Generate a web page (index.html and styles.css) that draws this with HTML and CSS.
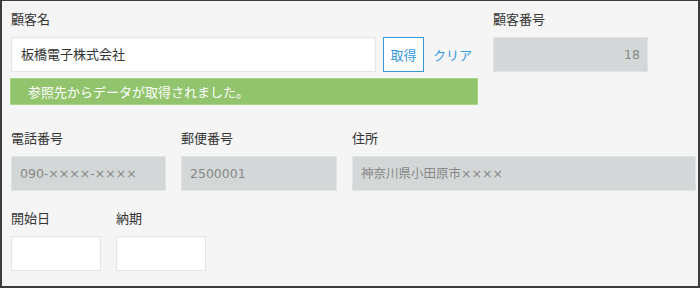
FILE: index.html
```html
<!DOCTYPE html>
<html lang="ja">
<head>
<meta charset="utf-8">
<link rel="stylesheet" href="styles.css">
</head>
<body>
<div class="frame">
  <div class="row row-first">
    <div class="field field-name">
      <div class="label">顧客名</div>
      <div class="lookup">
        <div class="input input-name">板橋電子株式会社</div>
        <button class="btn-get">取得</button>
        <span class="link-clear">クリア</span>
      </div>
      <div class="message">参照先からデータが取得されました。</div>
    </div>
    <div class="field">
      <div class="label">顧客番号</div>
      <div class="input disabled num w155">18</div>
    </div>
  </div>
  <div class="row">
    <div class="field">
      <div class="label">電話番号</div>
      <div class="input disabled w155">090-××××-××××</div>
    </div>
    <div class="field">
      <div class="label">郵便番号</div>
      <div class="input disabled w156">2500001</div>
    </div>
    <div class="field">
      <div class="label">住所</div>
      <div class="input disabled w344">神奈川県小田原市××××</div>
    </div>
  </div>
  <div class="row">
    <div class="field">
      <div class="label">開始日</div>
      <div class="input w90"></div>
    </div>
    <div class="field">
      <div class="label">納期</div>
      <div class="input w90"></div>
    </div>
  </div>
</div>
</body>
</html>
```

FILE: styles.css
```css
* { box-sizing: border-box; }
html, body { margin: 0; padding: 0; }
body {
  width: 700px;
  height: 288px;
  overflow: hidden;
  font-family: "Noto Sans", "Noto Sans CJK JP", sans-serif;
  font-size: 13px;
  color: #333;
}
.frame {
  width: 700px;
  height: 288px;
  background: #f5f5f5;
  border: 2px solid #3c3c3c;
  border-top-width: 1px;
  padding: 8px 0 0 9px;
  overflow: hidden;
}
.row {
  display: flex;
  gap: 15px;
  padding-bottom: 17px;
}
.row-first { padding-bottom: 23px; gap: 15px; }
.field { display: flex; flex-direction: column; }
.field-name { width: 467px; }
.label {
  height: 20px;
  line-height: 20px;
  margin-bottom: 8px;
  white-space: nowrap;
}
.lookup { display: flex; align-items: center; }
.input {
  height: 35px;
  line-height: 33px;
  padding: 0 8px;
  background: #fff;
  border: 1px solid #e3e6e7;
  box-shadow: inset 0 1px 2px rgba(0,0,0,0.04);
  white-space: nowrap;
  overflow: hidden;
}
.input-name { width: 365px; padding-left: 9px; }
.disabled {
  background: #d4d7d7;
  border-color: #e0e3e4;
  color: #888;
  box-shadow: none;
  font-family: "DejaVu Sans", "Noto Sans CJK JP", sans-serif;
  font-size: 12.5px;
}
.num { text-align: right; padding-right: 7px; }
.w155 { width: 155px; }
.w156 { width: 156px; }
.w344 { width: 344px; }
.w90 { width: 90px; }
.btn-get {
  margin-left: 7px;
  width: 41px;
  height: 35px;
  padding: 0;
  background: #fff;
  border: 1px solid #3498db;
  color: #3498db;
  font-family: inherit;
  font-size: 13px;
}
.link-clear {
  margin-left: 9px;
  color: #3498db;
  white-space: nowrap;
}
.message {
  margin-top: 6px;
  width: 468px;
  margin-left: -1px;
  height: 27px;
  line-height: 26px;
  padding-left: 17px;
  background: #91c46c;
  border: 1px solid #a8d488;
  color: #fff;
  white-space: nowrap;
}
```
